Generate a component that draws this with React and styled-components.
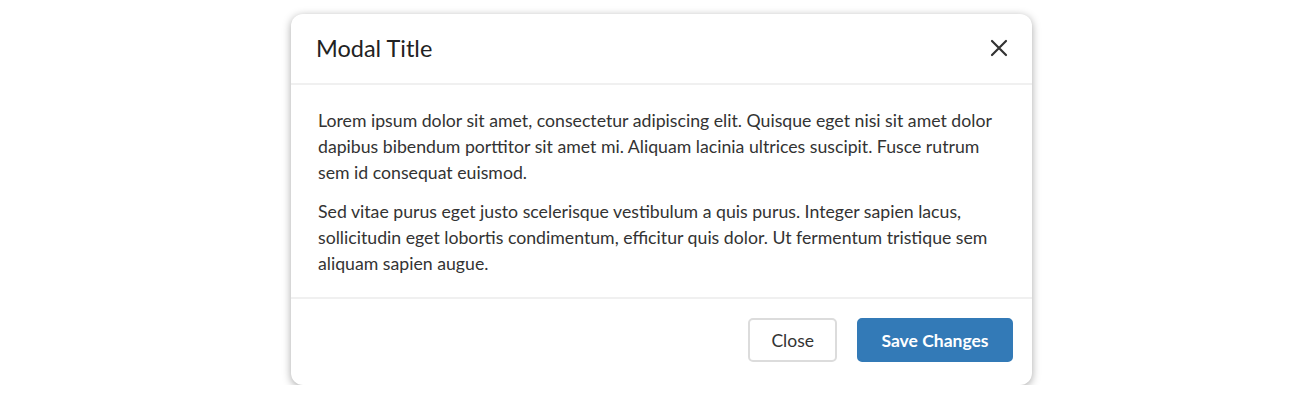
import React from "react";
import styled, { createGlobalStyle } from "styled-components";

const GlobalStyle = createGlobalStyle`
  body {
    margin: 0;
    background: #ffffff;
    font-family: Lato, "Liberation Sans", sans-serif;
  }
`;

function App() {
  return (
    <>
      <GlobalStyle />
      <Page>
        <Modal>
          <Header>
            <Title>Modal Title</Title>
            <CloseIcon aria-label="Close">
              <svg width="18" height="18" viewBox="0 0 18 18">
                <path d="M2 2 L16 16 M16 2 L2 16" stroke="#333" strokeWidth="2.2" strokeLinecap="round" />
              </svg>
            </CloseIcon>
          </Header>
          <Body>
            <Paragraph>
              Lorem ipsum dolor sit amet, consectetur adipiscing elit. Quisque eget nisi sit amet dolor
              dapibus bibendum porttitor sit amet mi. Aliquam lacinia ultrices suscipit. Fusce rutrum
              sem id consequat euismod.
            </Paragraph>
            <Paragraph>
              Sed vitae purus eget justo scelerisque vestibulum a quis purus. Integer sapien lacus,
              sollicitudin eget lobortis condimentum, efficitur quis dolor. Ut fermentum tristique sem
              aliquam sapien augue.
            </Paragraph>
          </Body>
          <Footer>
            <Button>Close</Button>
            <Button primary>Save Changes</Button>
          </Footer>
        </Modal>
      </Page>
    </>
  );
}

export default App;

const Page = styled.div`
  display: flex;
  justify-content: center;
  padding-top: 14px;
`;

const Modal = styled.div`
  width: 741px;
  background: #fff;
  border-radius: 12px;
  box-shadow: 0 2px 8px rgba(0, 0, 0, 0.35);
  margin-left: 23px;
`;

const Header = styled.div`
  box-sizing: border-box;
  height: 71px;
  display: flex;
  align-items: center;
  justify-content: space-between;
  padding: 0 24px 2px 25px;
  border-bottom: 2px solid #f0f0f0;
`;

const Title = styled.h4`
  margin: 0;
  font-size: 23.5px;
  font-weight: 400;
  color: #222;
`;

const CloseIcon = styled.button`
  border: none;
  background: transparent;
  padding: 0;
  display: flex;
  cursor: pointer;
`;

const Body = styled.div`
  padding: 23px 27px 20px 27px;
  border-bottom: 2px solid #f0f0f0;
`;

const Paragraph = styled.p`
  margin: 0 0 13px;
  font-size: 17.7px;
  line-height: 26px;
  color: #333;
  max-width: 684px;

  &:last-child {
    margin-bottom: 0;
  }
`;

const Footer = styled.div`
  display: flex;
  justify-content: flex-end;
  gap: 20px;
  padding: 19px 19px 23px;
`;

const Button = styled.button`
  height: 44px;
  padding: 0 ${(p) => (p.primary ? "22.5px" : "21px")};
  font-family: Lato, "Liberation Sans", sans-serif;
  font-size: 17.5px;
  font-weight: ${(p) => (p.primary ? 700 : 400)};
  color: ${(p) => (p.primary ? "#fff" : "#333")};
  background: ${(p) => (p.primary ? "#337ab7" : "#fff")};
  border: 2px solid ${(p) => (p.primary ? "#337ab7" : "#dcdcdc")};
  border-radius: 5px;
  cursor: pointer;
`;
